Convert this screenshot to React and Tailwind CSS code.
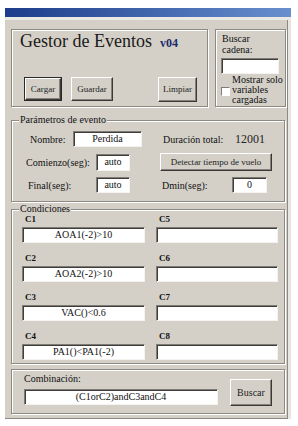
import React from 'react';

const groove = 'border border-[#8d8a83] shadow-[inset_1px_1px_0_#fff,1px_1px_0_#fff]';

const Field = ({ className = '', children }) => (
  <div
    className={`bg-white border border-t-[#7f7c76] border-l-[#7f7c76] border-b-[#f4f3f0] border-r-[#f4f3f0] shadow-[inset_1px_1px_0_#3f3d3a] flex items-center justify-center text-[10px] leading-none text-[#111] whitespace-nowrap ${className}`}
  >
    {children}
  </div>
);

const Btn = ({ className = '', children }) => (
  <div
    className={`border border-t-white border-l-white border-b-[#3a3936] border-r-[#3a3936] shadow-[inset_-1px_-1px_0_#85827b] flex items-center justify-center text-[9px] leading-none text-[#222] whitespace-nowrap ${className}`}
  >
    {children}
  </div>
);

const Cond = ({ label, value }) => (
  <div className="flex flex-col">
    <span className="h-[8px] leading-[8px] text-[9px] font-bold text-[#111] ml-[3px]">{label}</span>
    <Field className="mt-[4px] h-[16px] w-full">{value}</Field>
  </div>
);

const App = () => {
  return (
    <div className="w-[298px] h-[426px] bg-white pt-[8px] pl-[5px] font-['Liberation_Serif','Times_New_Roman',serif] text-[#111]">
      <div className="w-[286px] h-[411px] flex flex-col">
        <div className="h-[9px] bg-linear-to-r from-[#1d3c8a] to-[#6a8fce]" />
        <div className="h-[3px] bg-[#ebe9e4]" />
        <div className="flex-1 flex">
          <div className="flex-1 bg-[#d4d0c8] border-r border-b border-[#8d8a83] pl-[6px] pt-[9px]">
            {/* top row */}
            <div className="flex gap-[7px] h-[78px]">
              <div className={`${groove} w-[197px] h-full flex flex-col`}>
                <div className="flex items-baseline pl-[8px] pt-[1px]">
                  <span className="text-[18px] leading-[20px] text-[#1a1a1a]">Gestor de Eventos</span>
                  <span className="ml-[8px] text-[12px] font-bold text-[#1c2a6e]">v04</span>
                </div>
                <div className="flex pl-[12px] mt-[25px]">
                  <div className="border border-[#2a2a2a] w-[38px] h-[24px]">
                    <Btn className="w-full h-full">Cargar</Btn>
                  </div>
                  <Btn className="ml-[9px] w-[42px] h-[24px]">Guardar</Btn>
                  <Btn className="ml-[45px] w-[39px] h-[25px]">Limpiar</Btn>
                </div>
              </div>
              <div className={`${groove} w-[71px] h-full pl-[5px] pt-[3px]`}>
                <div className="ml-px text-[10px] leading-[11px]">
                  Buscar
                  <br />
                  cadena:
                </div>
                <Field className="mt-[3px] w-[58px] h-[16px]" />
                <div className="flex mt-px">
                  <div className="mt-[12px] w-[9px] h-[9px] bg-white border border-t-[#7f7c76] border-l-[#7f7c76] border-b-white border-r-white shrink-0" />
                  <div className="ml-[2px] text-[10px] leading-[10px] whitespace-nowrap">
                    Mostrar solo
                    <br />
                    variables
                    <br />
                    cargadas
                  </div>
                </div>
              </div>
            </div>

            {/* parámetros */}
            <fieldset className={`${groove} w-[274px] mt-[7px] pb-[8px] text-[10px]`}>
              <legend className="ml-[7px] px-px bg-[#d4d0c8] leading-[12px]">Parámetros de evento</legend>
              <div className="flex items-center mt-[5px] h-[16px]">
                <span className="ml-[18px] w-[43px]">Nombre:</span>
                <Field className="w-[69px] h-[16px]">Perdida</Field>
                <span className="ml-[21px] w-[72px] whitespace-nowrap">Duración total:</span>
                <span className="text-[12px] text-[#222]">12001</span>
              </div>
              <div className="flex items-center mt-[6px] h-[18px]">
                <span className="ml-[14px] w-[70px] whitespace-nowrap">Comienzo(seg):</span>
                <Field className="w-[34px] h-[17px]">auto</Field>
                <Btn className="ml-[30px] w-[112px] h-[18px]">Detectar tiempo de vuelo</Btn>
              </div>
              <div className="flex items-center mt-[6px] h-[16px]">
                <span className="ml-[16px] w-[68px]">Final(seg):</span>
                <Field className="w-[34px] h-[16px]">auto</Field>
                <span className="ml-[32px] w-[70px]">Dmin(seg):</span>
                <Field className="w-[35px] h-[16px]">0</Field>
              </div>
            </fieldset>

            {/* condiciones */}
            <fieldset className={`${groove} w-[274px] mt-px pb-[3px] text-[10px]`}>
              <legend className="ml-[7px] px-px bg-[#d4d0c8] leading-[12px]">Condiciones</legend>
              <div className="grid grid-cols-[123px_122px] gap-x-[11px] gap-y-[11px] ml-[10px]">
                <Cond label="C1" value="AOA1(-2)>10" />
                <Cond label="C5" value="" />
                <Cond label="C2" value="AOA2(-2)>10" />
                <Cond label="C6" value="" />
                <Cond label="C3" value="VAC()<0.6" />
                <Cond label="C7" value="" />
                <Cond label="C4" value="PA1()<PA1(-2)" />
                <Cond label="C8" value="" />
              </div>
            </fieldset>

            {/* combinación */}
            <div className={`${groove} w-[274px] h-[45px] mt-[5px] flex items-start pl-[12px]`}>
              <div className="flex flex-col pt-[4px]">
                <span className="text-[10px] leading-[10px]">Combinación:</span>
                <Field className="mt-[5px] w-[194px] h-[16px]">(C1orC2)andC3andC4</Field>
              </div>
              <Btn className="ml-[12px] mt-[9px] w-[42px] h-[27px] text-[10px]">Buscar</Btn>
            </div>
          </div>
          <div className="w-[3px] bg-[#e8e6e1]" />
        </div>
      </div>
    </div>
  );
};

export default App;
